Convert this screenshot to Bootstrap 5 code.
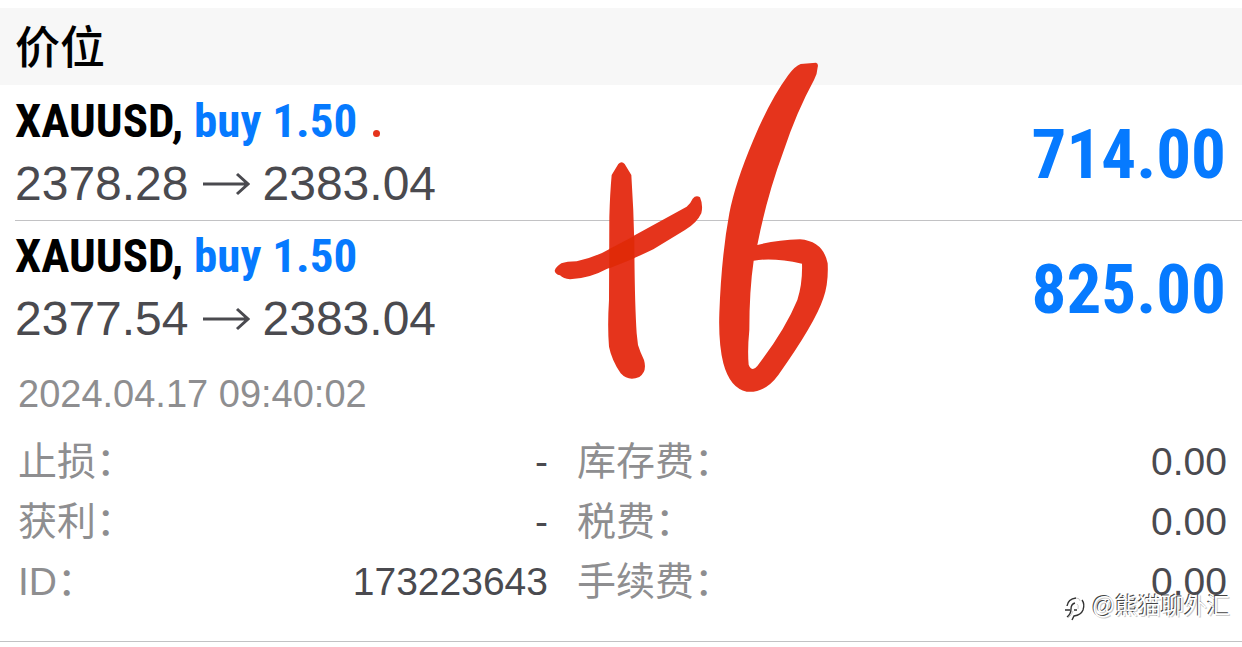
<!DOCTYPE html>
<html lang="zh-CN">
<head>
<meta charset="utf-8">
<meta name="viewport" content="width=device-width, initial-scale=1">
<title>价位</title>
<link href="https://cdn.jsdelivr.net/npm/bootstrap@5.3.0/dist/css/bootstrap.min.css" rel="stylesheet">
<style>
  body { font-family: "Liberation Sans", "Noto Sans CJK SC", sans-serif; color: #4a4a4f; background: #fff; }
  .screen { padding-top: 8px; overflow: hidden; }
  .section-title { background: #f7f7f7; color: #000; font-size: 45px; line-height: 73px; font-weight: 500; padding: 4px 15px 0; }
  .trade { padding: 8px 16px 3px 0; margin-left: 15px; }
  .trade + .trade { border-top: 1px solid #c2c2c4; padding-top: 7px; }
  .symbol { font: bold 47px/56px "Roboto Condensed", "Liberation Sans", sans-serif; color: #000; white-space: nowrap; }
  .side, .profit { color: #067aff; }
  .prices { font-size: 48px; line-height: 62px; padding-top: 4px; white-space: nowrap; }
  .arrow { width: 48px; height: 24px; margin: 0 13px; }
  .profit { font: bold 69px/124px "Roboto Condensed", "Liberation Sans", sans-serif; }
  .dot { width: 7px; height: 7px; background: #e5341c; margin: 24px 0 0 16px; }
  .details { padding: 9px 15px 29px 18px; border-bottom: 1px solid #c2c2c4; font-size: 39px; line-height: 60px; }
  .opened { font-size: 38px; line-height: 60px; color: #8e8e90; padding-bottom: 8px; }
  .detail-grid { display: grid; grid-template-columns: 530fr 650fr; column-gap: 29px; margin: 0; }
  .detail-grid dt { font-weight: 400; color: #8e8e90; }
  .detail-grid dd { margin: 0; }
  .marker { left: 43.5%; top: 50px; width: 300px; height: 350px; pointer-events: none; }
  .watermark { right: 12px; bottom: 19px; color: #fff; font-size: 23px; line-height: 30px; text-shadow: -1px -1px 0 #444, 1px 1px 0 #ccc; }
  .watermark svg { width: 22px; height: 26px; margin: 6px 6px 0 0; }
</style>
</head>
<body>
<main class="screen position-relative">
  <h1 class="section-title m-0">价位</h1>
  <section class="trade d-flex justify-content-between">
    <div>
      <div class="symbol d-flex align-items-center"><span>XAUUSD, <span class="side">buy 1.50</span></span><span class="dot rounded-circle"></span></div>
      <div class="prices d-flex align-items-center"><span>2378.28</span>
        <svg class="arrow" viewBox="0 0 48 24" fill="none" stroke="#4a4a4f" stroke-width="3" aria-hidden="true"><path d="M1 12H46M35 2L46 12L35 22"/></svg>
        <span>2383.04</span></div>
    </div>
    <div class="profit">714.00</div>
  </section>
  <section class="trade d-flex justify-content-between">
    <div>
      <div class="symbol">XAUUSD, <span class="side">buy 1.50</span></div>
      <div class="prices d-flex align-items-center"><span>2377.54</span>
        <svg class="arrow" viewBox="0 0 48 24" fill="none" stroke="#4a4a4f" stroke-width="3" aria-hidden="true"><path d="M1 12H46M35 2L46 12L35 22"/></svg>
        <span>2383.04</span></div>
    </div>
    <div class="profit">825.00</div>
  </section>
  <section class="details position-relative">
    <div class="opened">2024.04.17 09:40:02</div>
    <dl class="detail-grid">
      <div class="d-flex justify-content-between"><dt>止损：</dt><dd>-</dd></div>
      <div class="d-flex justify-content-between"><dt>库存费：</dt><dd>0.00</dd></div>
      <div class="d-flex justify-content-between"><dt>获利：</dt><dd>-</dd></div>
      <div class="d-flex justify-content-between"><dt>税费：</dt><dd>0.00</dd></div>
      <div class="d-flex justify-content-between"><dt>ID：</dt><dd>173223643</dd></div>
      <div class="d-flex justify-content-between"><dt>手续费：</dt><dd>0.00</dd></div>
    </dl>
    <div class="watermark position-absolute d-flex align-items-center">
      <svg viewBox="0 0 22 26" fill="none" aria-hidden="true">
        <g stroke="#333" stroke-width="1.4"><path d="M3 10Q4 3 12 2M11 7Q7 8 7 13Q7 18 3 21M1 14H6M10 14H13M18 4Q21 8 19 14Q17 19 10 20L8 24"/></g>
        <g stroke="#ccc" stroke-width="1"><path d="M12 2Q16 2 16 5M13 8Q15 9 14 13M4 22Q8 19 9 15"/></g>
      </svg>
      <span>@熊猫聊外汇</span></div>
  </section>
  <svg class="marker position-absolute" viewBox="0 0 900 1050" aria-hidden="true" fill="#e5341c">
    <path d="M235 342Q245 332 254 342L274 375Q281 480 283 580Q284 760 290 850L294 885Q300 905 312 930Q322 965 298 981Q265 995 242 970Q215 930 207 890Q202 830 207 750L208 500Q210 430 215 375Z"/>
    <path d="M44 662Q48 650 64 640Q80 634 110 634Q170 620 210 596L280 558L440 470Q452 460 458 446Q468 434 480 442Q490 465 484 490Q470 520 435 540L340 598Q285 625 200 657Q150 685 90 688Q70 686 60 676Q45 672 44 662Z"/>
    <path fill="#e02a08" d="M208 597L283 558L283 625L208 655Z"/>
    <path fill-rule="evenodd" d="M782 42L828 38Q836 40 833 52Q832 72 822 90Q770 185 730 305Q680 440 652 585Q710 570 780 568Q850 574 863 640Q866 700 850 745Q825 820 715 975Q675 1030 620 1025Q570 1015 550 940Q535 880 538 790Q544 620 568 490Q585 400 640 270Q690 150 745 75Q765 48 782 42ZM641 632Q700 622 786 641Q788 700 772 750Q735 840 652 948Q636 968 626 944Q622 900 628 840Q628 720 641 632Z"/>
  </svg>
</main>
<script src="https://cdn.jsdelivr.net/npm/bootstrap@5.3.0/dist/js/bootstrap.bundle.min.js"></script>
</body>
</html>
